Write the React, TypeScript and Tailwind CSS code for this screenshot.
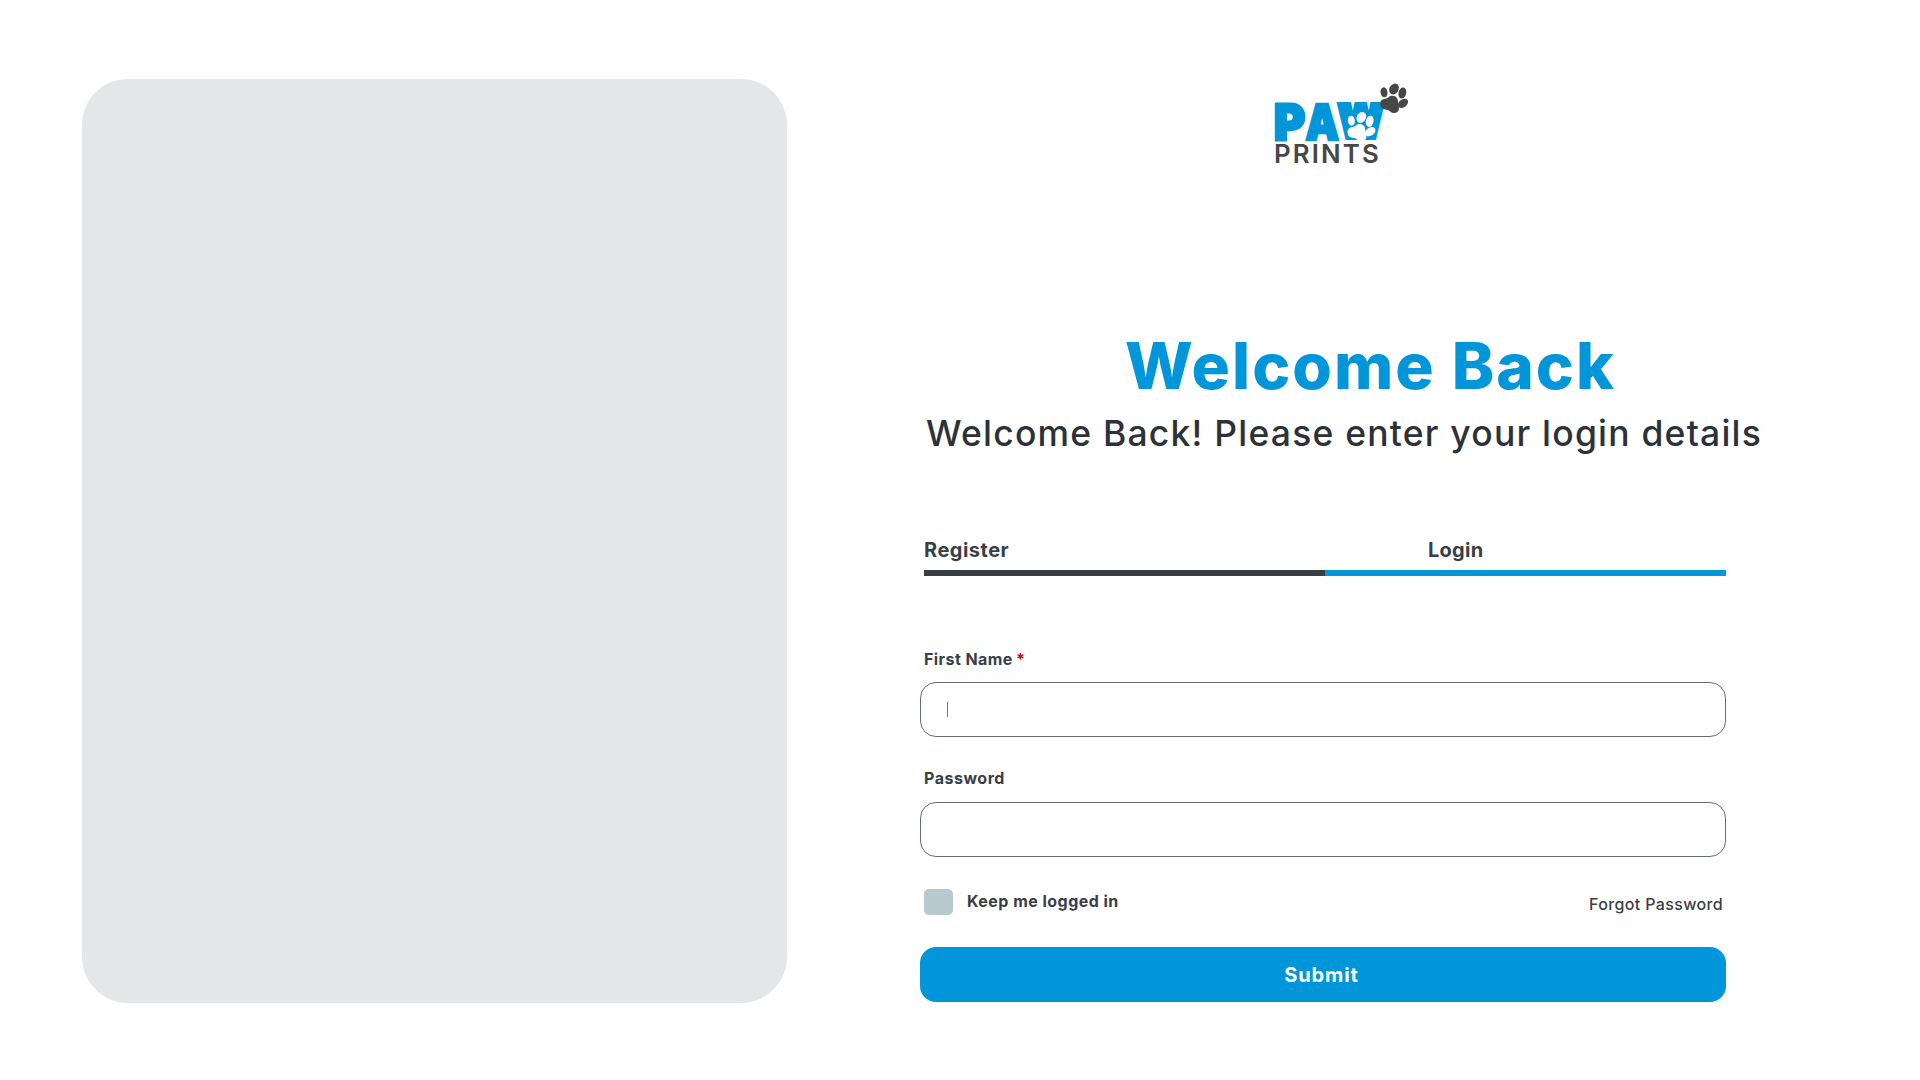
import React from "react";

function Paw() {
  return (
    <>
      <ellipse cx="162" cy="43" rx="10.5" ry="15" transform="rotate(-8 162 43)" />
      <ellipse cx="192" cy="33" rx="13.5" ry="17" transform="rotate(32 192 33)" />
      <ellipse cx="217" cy="45" rx="11.5" ry="17" transform="rotate(14 217 45)" />
      <ellipse cx="219" cy="76" rx="17" ry="12" transform="rotate(-38 219 76)" />
      <path d="M151 80C149 68 157 63 166 62C175 61 176 53 187 53C199 53 204 62 204 72C204 80 208 84 207 92C206 102 198 106 190 105C181 104 180 97 170 95C160 93 153 92 151 80Z" />
    </>
  );
}

function Logo() {
  return (
    <svg
      className="ml-[350px] h-[90px] w-[145px]"
      viewBox="0 0 145 90"
      role="img"
      aria-label="Paw Prints"
    >
      <g
        fill="#0096d9"
        stroke="#0096d9"
        strokeLinejoin="miter"
        fontFamily="Inter, sans-serif"
        fontWeight="900"
      >
        <text fontSize="50" strokeWidth="3" transform="translate(4.1 62.2) scale(0.95 1)">P</text>
        <text fontSize="50" strokeWidth="2.6" transform="translate(35.4 61.6) scale(0.84 0.99)">A</text>
        <text fontSize="47" strokeWidth="6.4" transform="translate(69 59.2) scale(0.85 0.92)">W</text>
      </g>
      <g transform="translate(60 0) scale(0.33333)">
        <g fill="#474747">
          <Paw />
        </g>
        <g fill="#ffffff" transform="translate(-98 85)">
          <Paw />
        </g>
      </g>
      <text
        x="4"
        y="85.3"
        fill="#474747"
        fontFamily="Inter, sans-serif"
        fontWeight="620"
        fontSize="25.8"
        letterSpacing="2.15"
      >
        PRINTS
      </text>
    </svg>
  );
}

export default function App() {
  return (
    <main className="flex h-[1080px] w-[1920px] overflow-hidden bg-white font-['Inter',sans-serif] text-[#393e46]">
      <section className="mt-[79px] ml-[82px] h-[924px] w-[705px] shrink-0 rounded-[46px] bg-[#e4e6e8]" />

      <section className="ml-[133px] flex w-[880px] flex-col pt-[78px]">
        <Logo />

        <h1 className="mt-[166px] ml-[205px] text-[64px] leading-[64px] font-extrabold tracking-[2px] whitespace-nowrap text-[#0096d9]">
          Welcome Back
        </h1>
        <p className="mt-[16px] ml-[6px] text-[35.5px] leading-[40px] font-[450] tracking-[1.2px] whitespace-nowrap text-[#2d3238]">
          Welcome Back! Please enter your login details
        </p>

        <form className="flex w-[806px] flex-col">
          <div className="mt-[84px] ml-[4px] flex text-[20px] leading-[24px] font-bold">
            <div className="flex w-[401px] flex-col gap-2">
              <span className="tracking-[0.5px]">Register</span>
              <div className="h-[6px] bg-[#393e46]" />
            </div>
            <div className="flex w-[401px] flex-col gap-2">
              <span className="pl-[103px] tracking-[0.25px]">Login</span>
              <div className="h-[6px] bg-[#0096d9]" />
            </div>
          </div>

          <label className="mt-[73px] ml-[4px] text-[16px] leading-[20px] font-bold tracking-[0.43px]">
            First Name <span className="-ml-px text-[#d40000]">*</span>
          </label>
          <div className="mt-[13px] flex h-[55px] items-center rounded-[16px] border border-[#656b7c] pl-[26px]">
            <span className="h-[15px] w-px bg-[#777777]" />
          </div>

          <label className="mt-[31px] ml-[4px] text-[16px] leading-[20px] font-bold tracking-[0.52px]">
            Password
          </label>
          <div className="mt-[14px] h-[55px] rounded-[16px] border border-[#656b7c]" />

          <div className="mt-[32px] flex h-[26px] items-start pr-[3px] pl-[4px] text-[16px] leading-[20px]">
            <span className="h-[26px] w-[29px] rounded-[5px] bg-[#b7c9cf]" />
            <span className="mt-[2px] ml-[14px] font-bold tracking-[0.47px]">Keep me logged in</span>
            <a className="mt-[5px] ml-auto font-[450] tracking-[0.35px]">Forgot Password</a>
          </div>

          <button
            type="button"
            className="mt-[32px] h-[55px] rounded-[16px] bg-[#0096d9] pr-[3px] text-[20px] leading-[24px] font-bold tracking-[0.9px] text-white"
          >
            Submit
          </button>
        </form>
      </section>
    </main>
  );
}
